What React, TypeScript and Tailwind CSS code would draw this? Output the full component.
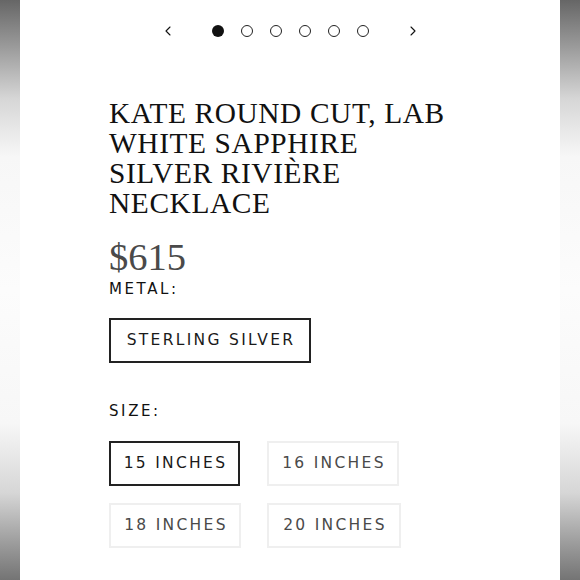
import { ChevronLeft, ChevronRight } from "lucide-react";

const sans = "font-['DejaVu_Sans',sans-serif]";

function SideBar() {
  return (
    <div className="w-[20px] shrink-0 bg-[linear-gradient(to_bottom,#666_0%,#9a9a9a_8%,#d6d6d6_17%,#f7f7f7_27%,#fcfcfc_50%,#f7f7f7_73%,#d6d6d6_85%,#9a9a9a_94%,#747474_100%)]" />
  );
}

function OptionButton({
  label,
  width,
  active,
}: {
  label: string;
  width: string;
  active?: boolean;
}) {
  return (
    <div
      className={`${width} h-[45px] flex items-center justify-center border-2 ${
        active ? "border-[#222] text-[#1a1a1a]" : "border-[#efefef] text-[#4a4a4a]"
      }`}
    >
      <span className={`${sans} text-[15.5px] tracking-[2.3px] pl-[2px]`}>{label}</span>
    </div>
  );
}

export default function App() {
  return (
    <div className="w-[580px] h-[580px] flex overflow-hidden bg-white">
      <SideBar />
      <div className="flex-1 bg-white flex flex-col">
        {/* Carousel nav */}
        <div className="flex items-center justify-center pt-[24px] h-[38px]">
          <ChevronLeft className="w-[16px] h-[16px] text-[#111]" strokeWidth={1.6} />
          <div className="flex items-center gap-[17px] mx-[36px]">
            <span className="w-[12px] h-[12px] rounded-full bg-[#111]" />
            {[0, 1, 2, 3, 4].map((i) => (
              <span
                key={i}
                className="w-[12px] h-[12px] rounded-full border-[1.5px] border-[#222]"
              />
            ))}
          </div>
          <ChevronRight className="w-[16px] h-[16px] text-[#111]" strokeWidth={1.6} />
        </div>

        <div className="pl-[89px] flex flex-col">
          <h1 className="mt-[60px] font-['Liberation_Serif',serif] text-[29.4px] tracking-[0.6px] leading-[30px] text-[#111] uppercase">
            Kate Round Cut, Lab
            <br />
            White Sapphire
            <br />
            Silver Rivière
            <br />
            Necklace
          </h1>

          <div className="mt-[19px] font-['Liberation_Serif',serif] text-[38.5px] leading-[40px] text-[#4a4a4a]">
            $615
          </div>

          <div className={`${sans} mt-[2px] text-[15px] leading-[20px] tracking-[2.6px] text-[#111]`}>
            METAL:
          </div>

          <div className="mt-[19px] flex">
            <OptionButton label="STERLING SILVER" width="w-[202px]" active />
          </div>

          <div className={`${sans} mt-[38px] text-[15px] leading-[20px] tracking-[2.6px] text-[#111]`}>
            SIZE:
          </div>

          <div className="mt-[20px] grid grid-cols-[auto_auto] justify-start gap-x-[26px] gap-y-[17px]">
            <OptionButton label="15 INCHES" width="w-[131px]" active />
            <OptionButton label="16 INCHES" width="w-[132px]" />
            <OptionButton label="18 INCHES" width="w-[132px]" />
            <OptionButton label="20 INCHES" width="w-[134px]" />
          </div>
        </div>
      </div>
      <SideBar />
    </div>
  );
}
